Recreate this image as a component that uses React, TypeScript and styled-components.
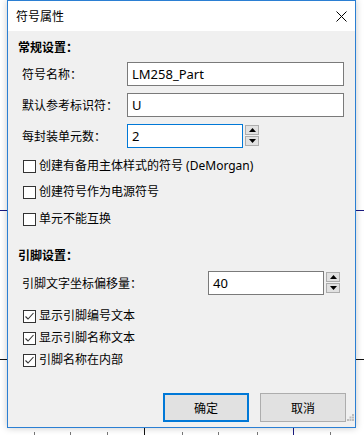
import React from "react";
import styled, { createGlobalStyle } from "styled-components";

const GlobalStyle = createGlobalStyle`
  html, body { margin: 0; padding: 0; background: #ffffff; }
  body {
    font-family: "Noto Sans", "Noto Sans CJK SC", sans-serif;
    font-size: 12px;
    color: #000;
  }
`;

const Page = styled.div`
  position: relative;
  width: 364px;
  height: 435px;
  overflow: hidden;
  padding-left: 7px;
  box-sizing: border-box;
`;

const Backdrop = styled.svg`
  position: absolute;
  left: 0;
  top: 0;
  width: 364px;
  height: 435px;
`;

const Window = styled.div`
  position: relative;
  z-index: 1;
  width: 349px;
  height: 428px;
  box-sizing: border-box;
  border: 1px solid #2b7fd3;
  background: #f0f0f0;
  display: flex;
  flex-direction: column;
  box-shadow: 0 0 7px rgba(0, 0, 0, 0.22);
`;

const TitleBar = styled.div`
  height: 30px;
  background: #ffffff;
  display: flex;
  align-items: center;
  justify-content: space-between;
  padding: 0 8px 0 8px;
  flex-shrink: 0;
`;

const Title = styled.span`
  font-size: 12px;
  line-height: 16px;
  font-family: "Noto Sans CJK SC", sans-serif;
`;

const CloseGlyph = styled.svg`
  width: 11px;
  height: 11px;
  margin-right: 0px;
`;

const Body = styled.div`
  flex: 1;
  display: flex;
  flex-direction: column;
  padding: 0 9px 0 10px;
  position: relative;
`;

const Heading = styled.div<{ $top: number }>`
  margin-top: ${(p) => p.$top}px;
  height: 16px;
  line-height: 16px;
  font-weight: 700;
  font-size: 12px;
  font-family: "Noto Sans CJK SC", sans-serif;
`;

const FieldRow = styled.div<{ $top: number }>`
  margin-top: ${(p) => p.$top}px;
  display: flex;
  align-items: center;
  height: 24px;
`;

const FieldLabel = styled.span<{ $width: number }>`
  width: ${(p) => p.$width}px;
  padding-left: 4px;
  box-sizing: border-box;
  flex-shrink: 0;
  line-height: 16px;
  font-family: "Noto Sans CJK SC", sans-serif;
`;

const TextBox = styled.div<{ $width: number; $focused?: boolean }>`
  width: ${(p) => p.$width}px;
  height: 24px;
  box-sizing: border-box;
  background: #fff;
  border: 1px solid ${(p) => (p.$focused ? "#0078d7" : "#7a7a7a")};
  display: flex;
  align-items: center;
  padding-left: 4px;
  font-size: 13px;
  line-height: 16px;
`;

const Spinner = styled.div`
  display: flex;
  flex-direction: column;
  gap: 1px;
  margin-left: 2px;
  height: 22px;
`;

const SpinButton = styled.div`
  width: 14px;
  height: 10px;
  box-sizing: border-box;
  border: 1px solid #adadad;
  background: #e1e1e1;
  display: flex;
  align-items: center;
  justify-content: center;
`;

const CheckRow = styled.div<{ $top: number }>`
  margin-top: ${(p) => p.$top}px;
  margin-left: 5px;
  height: 16px;
  display: flex;
  align-items: center;
  gap: 3px;
`;

const Box = styled.div`
  width: 13px;
  height: 13px;
  box-sizing: border-box;
  border: 1px solid #333;
  background: #fff;
  display: flex;
  align-items: center;
  justify-content: center;
  flex-shrink: 0;
`;

const CheckText = styled.span`
  line-height: 16px;
  white-space: nowrap;
`;

const ButtonRow = styled.div`
  margin-top: auto;
  margin-bottom: 5px;
  display: flex;
  justify-content: flex-end;
  gap: 11px;
`;

const Button = styled.div<{ $primary?: boolean }>`
  width: 86px;
  height: 29px;
  box-sizing: border-box;
  background: #e1e1e1;
  border: ${(p) => (p.$primary ? "2px solid #0078d7" : "1px solid #adadad")};
  display: flex;
  align-items: center;
  justify-content: center;
  line-height: 16px;
  font-family: "Noto Sans CJK SC", sans-serif;
`;

const Grip = styled.svg`
  position: absolute;
  right: 1px;
  bottom: 6px;
  width: 7px;
  height: 7px;
`;

const Arrow = ({ up }: { up?: boolean }) => (
  <svg width="7" height="4" viewBox="0 0 7 4">
    {up ? <path d="M3.5 0 L7 4 L0 4 Z" fill="#000" /> : <path d="M0 0 L7 0 L3.5 4 Z" fill="#000" />}
  </svg>
);

const Check = ({ checked }: { checked?: boolean }) => (
  <Box>
    {checked && (
      <svg width="11" height="11" viewBox="0 0 11 11">
        <path d="M1.5 5.5 L4 8 L9.5 2" fill="none" stroke="#333" strokeWidth="1.1" />
      </svg>
    )}
  </Box>
);

const ticksX = [34, 70, 107, 182, 218, 257, 330];

export default function App() {
  return (
    <>
      <GlobalStyle />
      <Page>
        <Backdrop viewBox="0 0 364 435">
          <line x1="0" y1="210.5" x2="364" y2="210.5" stroke="#1a1a80" strokeWidth="1" />
          <line x1="0" y1="359.5" x2="364" y2="359.5" stroke="#111" strokeWidth="1" />
          <line x1="144.5" y1="0" x2="144.5" y2="435" stroke="#111" strokeWidth="1" />
          <line x1="293.5" y1="0" x2="293.5" y2="435" stroke="#1a1a80" strokeWidth="1" />
          {ticksX.map((x) => (
            <line key={x} x1={x + 0.5} y1="432" x2={x + 0.5} y2="435" stroke="#777" strokeWidth="1" />
          ))}
        </Backdrop>
        <Window>
          <TitleBar>
            <Title>符号属性</Title>
            <CloseGlyph viewBox="0 0 11 11">
              <path d="M0.5 0.5 L10.5 10.5 M10.5 0.5 L0.5 10.5" stroke="#000" strokeWidth="1" />
            </CloseGlyph>
          </TitleBar>
          <Body>
            <Heading $top={8}>常规设置：</Heading>
            <FieldRow $top={7}>
              <FieldLabel $width={109}>符号名称：</FieldLabel>
              <TextBox $width={217}>LM258_Part</TextBox>
            </FieldRow>
            <FieldRow $top={7}>
              <FieldLabel $width={109}>默认参考标识符：</FieldLabel>
              <TextBox $width={217}>U</TextBox>
            </FieldRow>
            <FieldRow $top={7}>
              <FieldLabel $width={109}>每封装单元数：</FieldLabel>
              <TextBox $width={116} $focused>2</TextBox>
              <Spinner>
                <SpinButton><Arrow up /></SpinButton>
                <SpinButton><Arrow /></SpinButton>
              </Spinner>
            </FieldRow>
            <CheckRow $top={10}>
              <Check />
              <CheckText>创建有备用主体样式的符号 (DeMorgan)</CheckText>
            </CheckRow>
            <CheckRow $top={10}>
              <Check />
              <CheckText>创建符号作为电源符号</CheckText>
            </CheckRow>
            <CheckRow $top={11}>
              <Check />
              <CheckText>单元不能互换</CheckText>
            </CheckRow>
            <Heading $top={20}>引脚设置：</Heading>
            <FieldRow $top={8}>
              <FieldLabel $width={190}>引脚文字坐标偏移量：</FieldLabel>
              <TextBox $width={116}>40</TextBox>
              <Spinner>
                <SpinButton><Arrow up /></SpinButton>
                <SpinButton><Arrow /></SpinButton>
              </Spinner>
            </FieldRow>
            <CheckRow $top={13}>
              <Check checked />
              <CheckText>显示引脚编号文本</CheckText>
            </CheckRow>
            <CheckRow $top={6}>
              <Check checked />
              <CheckText>显示引脚名称文本</CheckText>
            </CheckRow>
            <CheckRow $top={6}>
              <Check checked />
              <CheckText>引脚名称在内部</CheckText>
            </CheckRow>
            <ButtonRow>
              <Button $primary>确定</Button>
              <Button>取消</Button>
            </ButtonRow>
            <Grip viewBox="0 0 7 7">
              <rect x="5" y="0" width="2" height="2" fill="#bdbdbd" />
              <rect x="2.5" y="2.5" width="2" height="2" fill="#bdbdbd" />
              <rect x="5" y="2.5" width="2" height="2" fill="#bdbdbd" />
              <rect x="0" y="5" width="2" height="2" fill="#bdbdbd" />
              <rect x="2.5" y="5" width="2" height="2" fill="#bdbdbd" />
              <rect x="5" y="5" width="2" height="2" fill="#bdbdbd" />
            </Grip>
          </Body>
        </Window>
      </Page>
    </>
  );
}
